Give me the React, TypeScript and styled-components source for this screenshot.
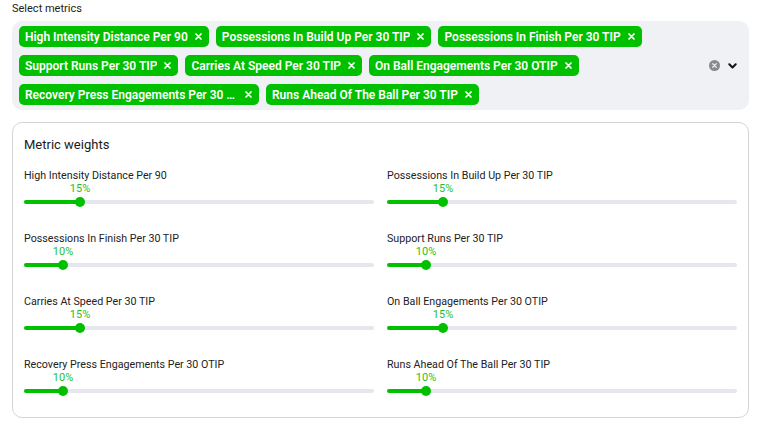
import React from 'react'
import styled, { createGlobalStyle } from 'styled-components'

const GREEN = '#00c000'

const GlobalStyle = createGlobalStyle`
  body {
    margin: 0;
    background: #ffffff;
    font-family: Roboto, 'Liberation Sans', Arial, sans-serif;
    color: #1f1f1f;
  }
`

const metrics = [
  { name: 'High Intensity Distance Per 90', weight: 15 },
  { name: 'Possessions In Build Up Per 30 TIP', weight: 15 },
  { name: 'Possessions In Finish Per 30 TIP', weight: 10 },
  { name: 'Support Runs Per 30 TIP', weight: 10 },
  { name: 'Carries At Speed Per 30 TIP', weight: 15 },
  { name: 'On Ball Engagements Per 30 OTIP', weight: 15 },
  { name: 'Recovery Press Engagements Per 30 OTIP', weight: 10 },
  { name: 'Runs Ahead Of The Ball Per 30 TIP', weight: 10 },
]

const Page = styled.div`
  padding: 2px 21px 0 12px;
`

const FieldLabel = styled.div`
  font-size: 11px;
  line-height: 14px;
  color: #222;
  margin-bottom: 5px;
`

const SelectBox = styled.div`
  display: flex;
  align-items: center;
  background: #f0f1f5;
  border-radius: 10px;
  padding: 5px 12px 5px 7px;
`

const ChipList = styled.div`
  flex: 1;
  display: flex;
  flex-wrap: wrap;
  gap: 8px 7px;
  max-width: 690px;
`

const Chip = styled.div`
  display: flex;
  align-items: center;
  gap: 7px;
  height: 21px;
  padding: 0 7px 0 6px;
  background: ${GREEN};
  border-radius: 5px;
  color: #fff;
  font-size: 12px;
  font-weight: 600;
  white-space: nowrap;
`

const ChipText = styled.span`
  max-width: 213px;
  overflow: hidden;
  text-overflow: ellipsis;
`

const Indicators = styled.div`
  display: flex;
  align-items: center;
  gap: 8px;
`

const Card = styled.div`
  margin-top: 12px;
  border: 1px solid #d4d4d8;
  border-radius: 10px;
  padding: 13px 11px 19px;
`

const CardTitle = styled.div`
  font-size: 13px;
  line-height: 18px;
  color: #1a1a1a;
  margin-bottom: 15px;
`

const Grid = styled.div`
  display: grid;
  grid-template-columns: 1fr 1fr;
  column-gap: 13px;
  row-gap: 23px;
`

const Item = styled.div`
  display: flex;
  flex-direction: column;
`

const ItemLabel = styled.div`
  font-size: 10.7px;
  line-height: 14px;
  color: #222;
`

const Slider = styled.div`
  position: relative;
  height: 14px;
  margin-top: 12px;
`

const ValueLabel = styled.span`
  position: absolute;
  bottom: 14px;
  transform: translateX(-50%);
  font-size: 11px;
  line-height: 12px;
  color: #1fc21f;
`

const Track = styled.div`
  position: absolute;
  left: 0;
  right: 0;
  top: 5px;
  height: 4px;
  border-radius: 2px;
  background: #e6e7ee;
`

const Fill = styled.div`
  position: absolute;
  left: 0;
  top: 5px;
  height: 4px;
  border-radius: 2px;
  background: ${GREEN};
`

const Thumb = styled.div`
  position: absolute;
  top: 2px;
  width: 10px;
  height: 10px;
  border-radius: 50%;
  background: ${GREEN};
  transform: translateX(-50%);
`

const ChipX = () => (
  <svg width="7" height="7" viewBox="0 0 7 7">
    <path d="M1 1L6 6M6 1L1 6" stroke="#fff" strokeWidth="1.7" strokeLinecap="round" />
  </svg>
)

const ClearIcon = () => (
  <svg width="11" height="11" viewBox="0 0 11 11">
    <circle cx="5.5" cy="5.5" r="5.5" fill="#8a8a8e" />
    <path d="M3.7 3.7L7.3 7.3M7.3 3.7L3.7 7.3" stroke="#e8e8ea" strokeWidth="1.3" strokeLinecap="round" />
  </svg>
)

const Chevron = () => (
  <svg width="9" height="6" viewBox="0 0 9 6">
    <path d="M1.3 1.3L4.5 4.5L7.7 1.3" stroke="#111" strokeWidth="2" fill="none" strokeLinecap="round" strokeLinejoin="round" />
  </svg>
)

const WeightSlider = ({ value }: { value: number }) => {
  // thumb centre stays inside the track, like a native range input
  const pos = `calc(5px + (100% - 10px) * ${value / 100})`
  return (
    <Slider>
      <Track />
      <Fill style={{ width: pos }} />
      <Thumb style={{ left: pos }} />
      <ValueLabel style={{ left: pos }}>{value}%</ValueLabel>
    </Slider>
  )
}

export default function App() {
  return (
    <Page>
      <GlobalStyle />
      <FieldLabel>Select metrics</FieldLabel>
      <SelectBox>
        <ChipList>
          {metrics.map((m) => (
            <Chip key={m.name}>
              <ChipText>{m.name}</ChipText>
              <ChipX />
            </Chip>
          ))}
        </ChipList>
        <Indicators>
          <ClearIcon />
          <Chevron />
        </Indicators>
      </SelectBox>
      <Card>
        <CardTitle>Metric weights</CardTitle>
        <Grid>
          {metrics.map((m) => (
            <Item key={m.name}>
              <ItemLabel>{m.name}</ItemLabel>
              <WeightSlider value={m.weight} />
            </Item>
          ))}
        </Grid>
      </Card>
    </Page>
  )
}
